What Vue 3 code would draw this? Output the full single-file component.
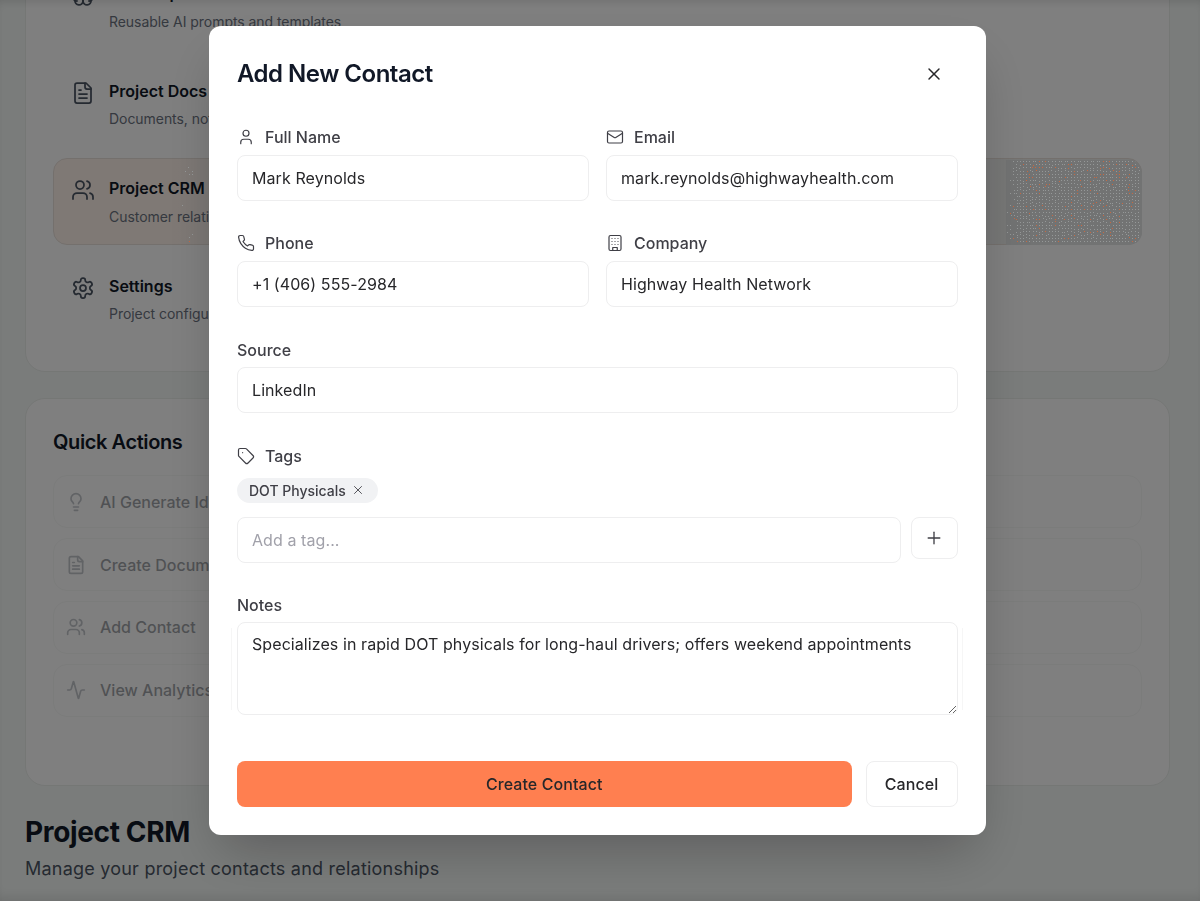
<template>
  <div class="page">
    <section class="card nav-card">
      <div v-for="item in navItems" :key="item.title" class="nav-row" :class="{ active: item.active }">
        <Icon :name="item.icon" :size="24" :stroke="1.75" class="nav-icon" />
        <div>
          <div class="nav-title">{{ item.title }}</div>
          <div class="nav-sub">{{ item.sub }}</div>
        </div>
      </div>
    </section>

    <section class="card actions-card">
      <h3>Quick Actions</h3>
      <div class="actions">
        <button v-for="a in actions" :key="a.label" class="action" type="button">
          <Icon :name="a.icon" :size="20" />
          {{ a.label }}
        </button>
      </div>
    </section>

    <h1>Project CRM</h1>
    <p class="lead">Manage your project contacts and relationships</p>
  </div>

  <div class="overlay">
    
    <svg class="speck speck-right" width="136" height="85" viewBox="0 0 136 85">
      <path :d="ditherRight.light" fill="#959898" />
      <path :d="ditherRight.orange" fill="#c9683f" />
    </svg>
    <svg class="speck speck-left" width="16" height="85" viewBox="0 0 16 85">
      <path :d="ditherLeft.light" fill="#959898" />
      <path :d="ditherLeft.orange" fill="#c9683f" />
    </svg>

    <div class="modal">
      <header class="modal-head">
        <h2>Add New Contact</h2>
        <button class="close" type="button"><Icon name="x" :size="20" :stroke="1.75" /></button>
      </header>

      <form class="form" @submit.prevent>
        <div class="two">
          <label v-for="f in fields" :key="f.label" class="field">
            <span class="label"><Icon :name="f.icon" :size="18" :stroke="1.6" />{{ f.label }}</span>
            <input type="text" :value="f.value" />
          </label>
        </div>

        <label class="field source">
          <span class="label">Source</span>
          <input type="text" value="LinkedIn" />
        </label>

        <div class="field">
          <span class="label tags-label"><Icon name="tag" :size="18" :stroke="1.6" />Tags</span>
          <div class="chips">
            <span class="chip">DOT Physicals <Icon name="x" :size="14" :stroke="1.5" /></span>
          </div>
          <div class="tag-row">
            <input type="text" placeholder="Add a tag..." />
            <button class="plus" type="button"><Icon name="plus" :size="20" :stroke="1.6" /></button>
          </div>
        </div>

        <label class="field notes">
          <span class="label">Notes</span>
          <textarea :value="notes"></textarea>
        </label>

        <div class="foot">
          <button class="submit" type="submit">Create Contact</button>
          <button class="cancel" type="button">Cancel</button>
        </div>
      </form>
    </div>
  </div>
</template>

<script setup>
import { h } from 'vue'

const paths = {
  user: ['M19 21v-2a4 4 0 0 0-4-4H9a4 4 0 0 0-4 4v2', 'M16 7a4 4 0 1 1-8 0 4 4 0 0 1 8 0'],
  mail: ['M4 4h16a2 2 0 0 1 2 2v12a2 2 0 0 1-2 2H4a2 2 0 0 1-2-2V6a2 2 0 0 1 2-2z', 'm22 7-8.97 5.7a1.94 1.94 0 0 1-2.06 0L2 7'],
  phone: ['M22 16.92v3a2 2 0 0 1-2.18 2 19.79 19.79 0 0 1-8.63-3.07 19.5 19.5 0 0 1-6-6 19.79 19.79 0 0 1-3.07-8.67A2 2 0 0 1 4.11 2h3a2 2 0 0 1 2 1.72 12.84 12.84 0 0 0 .7 2.81 2 2 0 0 1-.45 2.11L8.09 9.91a16 16 0 0 0 6 6l1.27-1.27a2 2 0 0 1 2.11-.45 12.84 12.84 0 0 0 2.81.7A2 2 0 0 1 22 16.92z'],
  building: ['M6 2h12a2 2 0 0 1 2 2v16a2 2 0 0 1-2 2H6a2 2 0 0 1-2-2V4a2 2 0 0 1 2-2z', 'M9 22v-4h6v4', 'M8 6h.01', 'M16 6h.01', 'M12 6h.01', 'M12 10h.01', 'M12 14h.01', 'M16 10h.01', 'M16 14h.01', 'M8 10h.01', 'M8 14h.01'],
  tag: ['M12.586 2.586A2 2 0 0 0 11.172 2H4a2 2 0 0 0-2 2v7.172a2 2 0 0 0 .586 1.414l8.704 8.704a2.426 2.426 0 0 0 3.42 0l6.58-6.58a2.426 2.426 0 0 0 0-3.42z', 'M7.5 7.5h.01'],
  x: ['M18 6 6 18', 'm6 6 12 12'],
  plus: ['M5 12h14', 'M12 5v14'],
  users: ['M16 21v-2a4 4 0 0 0-4-4H6a4 4 0 0 0-4 4v2', 'M13 7a4 4 0 1 1-8 0 4 4 0 0 1 8 0', 'M22 21v-2a4 4 0 0 0-3-3.87', 'M16 3.13a4 4 0 0 1 0 7.75'],
  file: ['M15 2H6a2 2 0 0 0-2 2v16a2 2 0 0 0 2 2h12a2 2 0 0 0 2-2V7Z', 'M14 2v4a2 2 0 0 0 2 2h4', 'M10 9H8', 'M16 13H8', 'M16 17H8'],
  settings: ['M12.22 2h-.44a2 2 0 0 0-2 2v.18a2 2 0 0 1-1 1.73l-.43.25a2 2 0 0 1-2 0l-.15-.08a2 2 0 0 0-2.73.73l-.22.38a2 2 0 0 0 .73 2.73l.15.1a2 2 0 0 1 1 1.72v.51a2 2 0 0 1-1 1.74l-.15.09a2 2 0 0 0-.73 2.73l.22.38a2 2 0 0 0 2.73.73l.15-.08a2 2 0 0 1 2 0l.43.25a2 2 0 0 1 1 1.73V20a2 2 0 0 0 2 2h.44a2 2 0 0 0 2-2v-.18a2 2 0 0 1 1-1.73l.43-.25a2 2 0 0 1 2 0l.15.08a2 2 0 0 0 2.73-.73l.22-.39a2 2 0 0 0-.73-2.73l-.15-.08a2 2 0 0 1-1-1.74v-.5a2 2 0 0 1 1-1.74l.15-.09a2 2 0 0 0 .73-2.73l-.22-.38a2 2 0 0 0-2.73-.73l-.15.08a2 2 0 0 1-2 0l-.43-.25a2 2 0 0 1-1-1.73V4a2 2 0 0 0-2-2z', 'M15 12a3 3 0 1 1-6 0 3 3 0 0 1 6 0'],
  bulb: ['M15 14c.2-1 .7-1.7 1.5-2.5 1-.9 1.5-2.2 1.5-3.5A6 6 0 0 0 6 8c0 1 .2 2.2 1.5 3.5.7.7 1.3 1.5 1.5 2.5', 'M9 18h6', 'M10 22h4'],
  activity: ['M22 12h-2.48a2 2 0 0 0-1.93 1.46l-2.35 8.36a.25.25 0 0 1-.48 0L9.24 2.18a.25.25 0 0 0-.48 0l-2.35 8.36A2 2 0 0 1 4.49 12H2'],
  brain: ['M12 5a3 3 0 1 0-5.997.125 4 4 0 0 0-2.526 5.77 4 4 0 0 0 .556 6.588A4 4 0 1 0 12 18Z', 'M12 5a3 3 0 1 1 5.997.125 4 4 0 0 1 2.526 5.77 4 4 0 0 1-.556 6.588A4 4 0 1 1 12 18Z', 'M15 13a4.5 4.5 0 0 1-3-4 4.5 4.5 0 0 1-3 4', 'M6 18a4 4 0 0 1-1.967-.516', 'M19.967 17.484A4 4 0 0 1 18 18']
}

const Icon = (props) =>
  h('svg', {
    width: props.size,
    height: props.size,
    viewBox: '0 0 24 24',
    fill: 'none',
    stroke: 'currentColor',
    'stroke-width': props.stroke || 2,
    'stroke-linecap': 'round',
    'stroke-linejoin': 'round'
  }, paths[props.name].map((d) => h('path', { d })))
Icon.props = ['name', 'size', 'stroke']

const navItems = [
  { icon: 'brain', title: 'AI Prompts', sub: 'Reusable AI prompts and templates' },
  { icon: 'file', title: 'Project Docs', sub: 'Documents, notes and files' },
  { icon: 'users', title: 'Project CRM', sub: 'Customer relationship management', active: true },
  { icon: 'settings', title: 'Settings', sub: 'Project configuration' }
]

const actions = [
  { icon: 'bulb', label: 'AI Generate Ideas' },
  { icon: 'file', label: 'Create Document' },
  { icon: 'users', label: 'Add Contact' },
  { icon: 'activity', label: 'View Analytics' }
]

const fields = [
  { icon: 'user', label: 'Full Name', value: 'Mark Reynolds' },
  { icon: 'mail', label: 'Email', value: 'mark.reynolds@highwayhealth.com' },
  { icon: 'phone', label: 'Phone', value: '+1 (406) 555-2984' },
  { icon: 'building', label: 'Company', value: 'Highway Health Network' }
]

const notes = 'Specializes in rapid DOT physicals for long-haul drivers; offers weekend appointments'

// integer hash by cell position, so the dots don't line up in rows
const noise = (a, b, salt) => {
  let v = Math.imul(a + 1, 73856093) ^ Math.imul(b + 1, 19349663) ^ Math.imul(salt, 83492791)
  v = Math.imul(v ^ (v >>> 15), 2246822519)
  v = Math.imul(v ^ (v >>> 13), 3266489917)
  return ((v ^ (v >>> 16)) >>> 0) / 4294967296
}

// a jittered grid of single pixels, keep() decides which cells get a dot
function makeDither(w, h, keep) {
  let light = ''
  let orange = ''
  for (let iy = 0; iy * 3.2 < h - 2; iy++) {
    for (let ix = 0; ix * 3.2 < w - 2; ix++) {
      const x = 1 + ix * 3.2
      const y = 1 + iy * 3.2
      if (!keep(x, y, noise(ix, iy, 1))) continue
      const px = Math.round(x + noise(ix, iy, 2) - 0.5)
      const py = Math.round(y + noise(ix, iy, 3) - 0.5)
      const dot = `M${px} ${py}h1v1h-1z`
      if (noise(ix, iy, 4) < 0.14) orange += dot
      else light += dot
    }
  }
  return { light, orange }
}

const ditherRight = makeDither(136, 85, (x, y, r) => x >= 10 || r < x / 10)
const ditherLeft = makeDither(16, 85, (x, y, r) => {
  const band = (y > 5 && y < 17) || (y > 45 && y < 50) || y > 73
  return band && r < 0.25
})
</script>

<style>
html, body {
  margin: 0;
  height: 100%;
  overflow: hidden;
  background: #f5f8f7;
}
</style>

<style scoped>
.page {
  width: 1195px;
  box-sizing: border-box;
  padding: 0 25px;
  margin-top: -66px;
  color: #111827;
  font-family: Inter, "Liberation Sans", sans-serif;
}

.card {
  background: #fff;
  border: 1px solid #eaeeeb;
  border-radius: 20px;
  padding: 27px;
}

.nav-card {
  display: flex;
  flex-direction: column;
  gap: 10px;
  padding-top: 28px;
  padding-bottom: 28px;
  margin-bottom: 26.5px;
}

.nav-row {
  display: flex;
  align-items: flex-start;
  gap: 14px;
  padding: 17.25px 17px 17.85px;
  border: 1px solid transparent;
  border-radius: 14px;
}

.nav-row.active {
  background: linear-gradient(90deg, #fff2ea, #fff2ea 11%, #f0efed 17%, #edeeed);
  border-color: #e8e0da;
}

.nav-icon {
  color: #4b5563;
  flex: none;
  margin-top: 2px;
}

.nav-title {
  font-size: 16px;
  line-height: 24px;
  font-weight: 600;
  margin-bottom: 6.4px;
}

.nav-sub {
  font-size: 14px;
  line-height: 20px;
  letter-spacing: -0.05px;
  color: #6b7280;
}

.actions-card {
  padding-top: 29px;
  padding-bottom: 68.4px;
}

.actions-card h3 {
  margin: 0 0 19px;
  font-size: 20px;
  line-height: 28px;
  font-weight: 600;
  letter-spacing: -0.4px;
}

.actions {
  display: flex;
  flex-direction: column;
  gap: 9.7px;
}

.action {
  display: flex;
  align-items: center;
  gap: 14px;
  height: 53px;
  padding: 0 12px;
  background: #fff;
  border: 1px solid #eaeeeb;
  border-radius: 14px;
  font: 500 16px Inter, "Liberation Sans", sans-serif;
  color: #111827;
  opacity: 0.4;
}

.action svg {
  color: #6b7280;
}

h1 {
  margin: 28px 0 0;
  font-size: 28px;
  line-height: 36px;
  font-weight: 700;
  letter-spacing: -0.35px;
}

.lead {
  margin: 5px 0 0;
  font-size: 18px;
  line-height: 28px;
  letter-spacing: 0.22px;
  color: #4b5563;
}

.overlay {
  position: fixed;
  inset: 0;
  box-sizing: border-box;
  padding: 26px 5.5px 0 0;
  display: flex;
  justify-content: center;
  align-items: flex-start;
  background: rgba(0, 0, 0, 0.5);
  box-shadow: inset 0 6px 8px -4px rgba(0, 0, 0, 0.12), inset 0 -10px 12px -6px rgba(0, 0, 0, 0.1);
  font-family: Inter, "Liberation Sans", sans-serif;
}

.speck {
  position: absolute;
  top: 160px;
}

.speck-right {
  left: 1006px;
  background: #727373;
  border-radius: 0 13px 13px 0;
}

.speck-left {
  left: 178px;
}

.modal {
  position: relative;
  width: 776.5px;
  box-sizing: border-box;
  padding: 32px 28px 28px;
  background: #fff;
  border-radius: 12px;
  box-shadow: 0 25px 50px -12px rgba(0, 0, 0, 0.25);
}

.modal-head {
  display: flex;
  justify-content: space-between;
  align-items: center;
  height: 32px;
  margin-bottom: 35px;
}

.modal-head h2 {
  margin: 0;
  font-size: 24px;
  line-height: 32px;
  font-weight: 600;
  letter-spacing: -0.5px;
  color: #111827;
}

.close {
  display: flex;
  align-items: center;
  justify-content: center;
  width: 40px;
  height: 40px;
  margin-right: 4px;
  padding: 0;
  border: 0;
  background: none;
  color: #27272a;
}

.form {
  display: flex;
  flex-direction: column;
  gap: 30.4px;
}

.two {
  display: grid;
  grid-template-columns: 1fr 1fr;
  gap: 30.4px 17.5px;
}

.field {
  display: block;
  min-width: 0;
}

.label {
  display: flex;
  align-items: center;
  gap: 10px;
  height: 24px;
  margin-bottom: 6px;
  font-size: 16px;
  font-weight: 500;
  color: #3f3f46;
}

.source .label {
  margin-bottom: 5.4px;
}

.tags-label {
  margin-bottom: 10px;
}

input,
textarea {
  display: block;
  width: 100%;
  box-sizing: border-box;
  height: 46px;
  padding: 0 14px;
  border: 1px solid #eeeeef;
  border-radius: 8px;
  background: #fff;
  outline: none;
  font: 400 16px Inter, "Liberation Sans", sans-serif;
  letter-spacing: 0.08px;
  color: #27272a;
}

input::placeholder {
  color: #a1a1aa;
  opacity: 1;
}

.notes {
  position: relative;
}

.notes .label {
  margin-bottom: 5px;
}

/* faint side lines next to the textarea */
.notes::after {
  content: "";
  position: absolute;
  left: -6px;
  right: -5px;
  top: 35px;
  bottom: 5px;
  border: solid #f6f6f6;
  border-width: 0 1px;
  pointer-events: none;
}

textarea {
  height: 93px;
  padding: 9px 14px;
  line-height: 24px;
  resize: vertical;
}

.chips {
  display: flex;
  margin-bottom: 14px;
}

.chip {
  display: inline-flex;
  align-items: center;
  gap: 5px;
  height: 25px;
  padding: 0 13px 0 12px;
  border-radius: 999px;
  background: #f1f2f4;
  font-size: 14px;
  font-weight: 500;
  color: #3f3f46;
}

.tag-row {
  display: flex;
  align-items: flex-start;
  gap: 10px;
}

.plus {
  flex: none;
  display: flex;
  align-items: center;
  justify-content: center;
  width: 47px;
  height: 42px;
  padding: 0 1px 0 0;
  border: 1px solid #eeeeef;
  border-radius: 8px;
  background: #fff;
  color: #3f3f46;
}

.foot {
  display: flex;
  gap: 14px;
  margin-top: 16px;
}

.foot button {
  height: 46px;
  border-radius: 8px;
  font: 500 16px Inter, "Liberation Sans", sans-serif;
  letter-spacing: 0.08px;
}

.submit {
  flex: 1;
  border: 0;
  background: #ff7f50;
  color: #27272a;
}

.cancel {
  width: 92px;
  border: 1px solid #eeeeef;
  background: #fff;
  color: #27272a;
}
</style>
